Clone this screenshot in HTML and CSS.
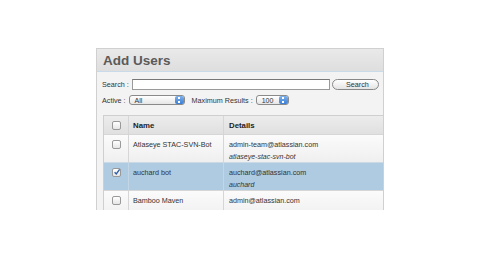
FILE: index.html
```html
<!DOCTYPE html>
<html>
<head>
<meta charset="utf-8">
<link rel="stylesheet" href="styles.css">
</head>
<body>
<div class="panel">
  <div class="panel-head">Add Users</div>
  <div class="panel-body">
    <div class="row">
      <span class="lbl">Search :</span>
      <span class="input"></span>
      <span class="btn">Search</span>
    </div>
    <div class="row row2">
      <span class="lbl">Active :</span>
      <span class="select sel-active"><span>All</span><span class="arrows"></span></span>
      <span class="lbl lbl-max">Maximum Results :</span>
      <span class="select sel-max"><span>100</span><span class="arrows"></span></span>
    </div>
  </div>
  <div class="table">
    <div class="tr th">
      <div class="c1"><span class="cb"></span></div>
      <div class="c2">Name</div>
      <div class="c3">Details</div>
    </div>
    <div class="tr">
      <div class="c1"><span class="cb"></span></div>
      <div class="c2">Atlaseye STAC-SVN-Bot</div>
      <div class="c3"><div>admin-team@atlassian.com</div><div class="it">atlaseye-stac-svn-bot</div></div>
    </div>
    <div class="tr sel">
      <div class="c1"><span class="cb on"><svg viewBox="0 0 8 8" width="8" height="8"><path d="M1.6 4.2 L3.3 6 L6.6 1.4" fill="none" stroke="#2d5fa8" stroke-width="1.4"/></svg></span></div>
      <div class="c2">auchard bot</div>
      <div class="c3"><div>auchard@atlassian.com</div><div class="it">auchard</div></div>
    </div>
    <div class="tr">
      <div class="c1"><span class="cb"></span></div>
      <div class="c2">Bamboo Maven</div>
      <div class="c3"><div>admin@atlassian.com</div><div class="it">bamboo</div></div>
    </div>
  </div>
</div>
</body>
</html>
```

FILE: styles.css
```css
html, body { margin: 0; padding: 0; background: #fff; }
body { font-family: "Liberation Sans", Arial, sans-serif; color: #333; }
.panel {
  margin: 48px 0 0 96px;
  width: 288px;
  height: 162px;
  overflow: hidden;
  border: 1px solid #d0d0d0;
  border-bottom: none;
  background: #f3f3f3;
  box-sizing: border-box;
}
.panel-head {
  height: 23px;
  box-sizing: border-box;
  padding: 4px 0 0 6px;
  font-size: 13.5px;
  font-weight: bold;
  color: #5a5a5a;
  background: linear-gradient(#e9e9e9, #dedede);
  border-bottom: 1px solid #c9dbe9;
}
.panel-body { padding: 6px 0 0 5px; }
.row { display: flex; align-items: center; height: 12px; font-size: 7.2px; color: #333; }
.row2 { margin-top: 4px; }
.lbl { margin-right: 3px; }
.input {
  width: 198px; height: 11px; box-sizing: border-box;
  border: 1px solid #9a9a9a; border-top-color: #777;
  background: #fff;
}
.btn {
  margin-left: 2px; width: 47px; height: 11px; box-sizing: border-box;
  border: 1px solid #888; border-radius: 6px;
  background: linear-gradient(#fff, #e4e4e4);
  display: flex; align-items: center; justify-content: flex-end; padding-right: 9px;
  font-size: 7.2px;
}
.select {
  height: 10px; box-sizing: border-box;
  border: 1px solid #8a8a8a; border-radius: 3px;
  background: linear-gradient(#fff, #e6e6e6);
  display: flex; align-items: center; justify-content: space-between;
  padding-left: 5px; font-size: 7px;
}
.sel-active { width: 56px; }
.sel-max { width: 33px; }
.lbl-max { margin-left: 7px; }
.arrows {
  width: 9px; height: 8px; border-radius: 2px;
  background: linear-gradient(#7fb1ea, #3a7fd8);
  position: relative;
}
.arrows::before, .arrows::after {
  content: ""; position: absolute; left: 3px; width: 2px; height: 2px; background: #fff;
}
.arrows::before { top: 1px; }
.arrows::after { top: 5px; }
.table {
  margin: 9px 0 0 6px;
  border: 1px solid #cfcfcf;
  border-right: none;
  background: #fff;
  font-size: 7.2px;
}
.tr { display: flex; border-top: 1px solid #d6d6d6; background: linear-gradient(#fbfbfb, #efefef); }
.tr:first-child { border-top: none; }
.th { height: 18px; background: linear-gradient(#ececec, #e0e0e0); font-weight: bold; font-size: 7.8px; color: #222; }
.tr:not(.th) { height: 27px; }
.sel { background: #aecbe1 !important; border-top-color: #c9d9e6; }
.c1 { width: 25px; display: flex; justify-content: center; padding-top: 5px; box-sizing: border-box; border-right: 1px solid #d6d6d6; }
.c2 { width: 95px; padding: 5px 0 0 4px; box-sizing: border-box; border-right: 1px solid #d6d6d6; }
.c3 { flex: 1; padding: 5px 0 0 5px; }
.c3 .it { font-style: italic; margin-top: 4px; font-size: 7px; }
.cb {
  width: 7px; height: 7px; border: 1px solid #999; border-radius: 2px;
  background: linear-gradient(#fff, #e6e6e6);
  display: block; position: relative;
}
.cb svg { position: absolute; left: 0; top: -1px; }
.sel .c1, .sel .c2 { border-right-color: #c3d6e5; }
```
